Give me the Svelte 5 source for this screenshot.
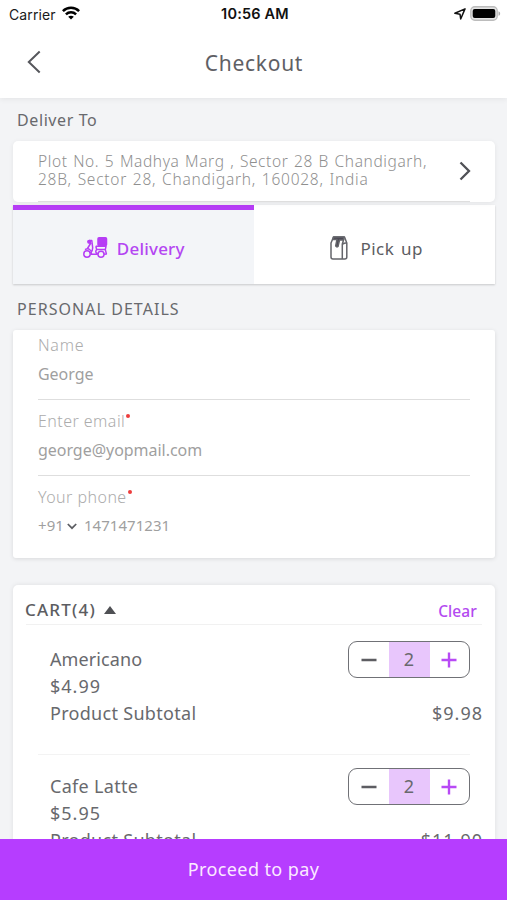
<script>
  const items = [
    { name: 'Americano', price: '$4.99', qty: 2, subtotal: '$9.98', tight: true },
    { name: 'Cafe Latte', price: '$5.95', qty: 2, subtotal: '$11.90', tight: false }
  ];
</script>

<div class="screen">
  <header>
    <div class="status">
      <div class="carrier">
        <span>Carrier</span>
        <svg width="18" height="14" viewBox="0 0 18 14" fill="none" stroke="#000" stroke-width="2.5">
          <path d="M.9 5.1C5.4.6 12.6.6 17.1 5.1" />
          <path d="M3.9 8.4c2.9-2.8 7.300-2.800 10.200 0" />
          <path d="M6.200 10.800c1.600-1.500 4-1.500 5.600 0L9 13.600Z" fill="#000" stroke="none" />
        </svg>
      </div>
      <div class="time">10:56 AM</div>
      <div class="power">
        <svg width="12" height="12" viewBox="0 0 12 12" fill="none" stroke="#111" stroke-width="1.500" stroke-linejoin="round">
          <path d="M.9 5.300 11 .9 6.700 11 6 6.200Z" />
        </svg>
        <svg width="31" height="15" viewBox="0 0 31 15">
          <rect x=".8" y=".8" width="26.400" height="13.400" rx="4" fill="#e4e4e4" stroke="#bcbcbc" stroke-width="1.400" />
          <rect x="2.700" y="2.900" width="22.600" height="9.200" rx="2" fill="#000" />
          <path d="M28.500 5.200c2.200.8 2.200 3.800 0 4.600Z" fill="#aaa" />
        </svg>
      </div>
    </div>
    <div class="nav">
      <svg width="14" height="24" viewBox="0 0 14 24" fill="none" stroke="#56575c" stroke-width="2">
        <path d="M12.700 1.500 1.800 12l10.900 10.500" />
      </svg>
      <h1>Checkout</h1>
    </div>
  </header>

  <main>
    <h2 class="deliver">Deliver To</h2>
    <section class="address">
      <p><span class="l1">Plot No. 5 Madhya Marg , Sector 28 B Chandigarh,</span><br /><span class="l2">28B, Sector 28, Chandigarh, 160028, India</span></p>
      <svg width="12" height="20" viewBox="0 0 12 20" fill="none" stroke="#505156" stroke-width="2.300">
        <path d="m1.500 1.500 8.500 8.500-8.500 8.500" />
      </svg>
    </section>

    <section class="tabs">
      <div class="tab active">
        <svg width="25" height="22" viewBox="0 0 25 22" fill="none" stroke="#b63df5" stroke-width="1.500" stroke-linejoin="round">
          <rect x="15" y=".8" width="8.500" height="7.800" rx="1" fill="#b63df5" />
          <circle cx="4" cy="17" r="3.200" />
          <circle cx="18" cy="17.300" r="3" />
          <circle cx="6.200" cy="4.800" r="1.400" fill="#b63df5" />
          <path d="M6 3.600h2.800l.9 7.200c.2 2.400-.9 3.700-2.300 5.200M7.500 17.300h7.300M2 12.600c3.600-2.200 6.800.5 6.500 4.400M7.800 6 4.500 11.500M12.800 9.300h10.200l-.7 3.300 1.100 4.300-2.400.4M12.800 9.300l.9 3.200h8.500M13.700 12.500c-1.400 1.500-1.400 3.200 1.100 4.400" />
        </svg>
        <span>Delivery</span>
      </div>
      <div class="tab">
        <svg width="18" height="24" viewBox="0 0 18 24" fill="none" stroke="#64656b" stroke-width="1.500" stroke-linejoin="round">
          <path d="M3.500 1h11l2.300 6V21q0 2-2 2H3q-2 0-2-2V7Z" />
          <path d="M14 2.500 12.300 8v15M13 8q2-1.300 3.500-.8" />
          <path d="M3.500 1h10.700l-1 3H9.500L8 10.500q-1.500 1-2.300-.5L7 3.500H3Z" fill="#4c4a55" />
        </svg>
        <span>Pick up</span>
      </div>
    </section>

    <h2 class="personal">PERSONAL DETAILS</h2>
    <section class="form">
      <div class="field">
        <div class="label name-label">Name</div>
        <div class="value">George</div>
      </div>
      <div class="field">
        <div class="label">Enter email<i></i></div>
        <div class="value">george@yopmail.com</div>
      </div>
      <div class="field">
        <div class="label">Your phone<i></i></div>
        <div class="value phone">
          <span>+91</span>
          <svg width="10" height="7" viewBox="0 0 10 7" fill="none" stroke="#5c5d62" stroke-width="1.700"><path d="m.8 1 4.200 4.200L9.200 1" /></svg>
          <span>1471471231</span>
        </div>
      </div>
    </section>

    <section class="cart">
      <div class="cart-head">
        <span class="title">CART(4)</span>
        <svg width="12" height="8" viewBox="0 0 12 8"><path d="M0 8 6 0l6 8Z" fill="#4f5054" /></svg>
        <span class="clear">Clear</span>
      </div>
      {#each items as item}
        <div class="item">
          <div class="row">
            <span class:tight={item.tight}>{item.name}</span>
            <div class="stepper">
              <span class="btn"><svg width="16" height="16" viewBox="0 0 16 16" stroke="#5d5d62" stroke-width="2.400"><path d="M.5 8h15" /></svg></span>
              <span class="qty">{item.qty}</span>
              <span class="btn"><svg width="16" height="16" viewBox="0 0 16 16" stroke="#b84af5" stroke-width="2.400"><path d="M.5 8h15M8 .5v15" /></svg></span>
            </div>
          </div>
          <div class="row money">{item.price}</div>
          <div class="row"><span>Product Subtotal</span><span class="money">{item.subtotal}</span></div>
        </div>
      {/each}
    </section>
  </main>

  <footer>Proceed to pay</footer>
</div>

<style>
  :global(body) { margin: 0; }
  .screen {
    width: 507px; height: 900px; overflow: hidden;
    display: flex; flex-direction: column;
    background: #f3f4f6; color: #68696d;
    font-family: 'Noto Sans', 'Open Sans', sans-serif; font-size: 16px;
  }
  .screen * { box-sizing: border-box; }
  svg { display: block; flex: none; }
  h1, h2, p { margin: 0; font-weight: 400; }
  header { flex: none; height: 98px; background: #fff; box-shadow: 0 1px 6px rgba(0, 0, 0, .07); z-index: 1; }
  .status {
    height: 28px; padding: 0 6px 0 9px;
    display: grid; grid-template-columns: 1fr auto 1fr; align-items: center;
    font-family: Inter, sans-serif; font-size: 14px; color: #1a1a1a;
  }
  .carrier { display: flex; align-items: center; gap: 6px; letter-spacing: .1px; }
  .carrier svg { margin-top: -2px; }
  .time { font-weight: 600; font-size: 14.500px; letter-spacing: .2px; color: #111; margin-top: -1px; }
  .power { display: flex; justify-content: flex-end; align-items: center; gap: 4px; margin-top: -1px; }
  .nav { height: 70px; padding: 0 27px; display: grid; grid-template-columns: 60px 1fr 60px; align-items: center; }
  .nav svg { margin-top: -2px; }
  h1 { font-size: 21px; letter-spacing: .7px; padding-left: 1px; text-align: center; color: #5f6065; }
  main { flex: 1; min-height: 0; overflow: hidden; padding: 0 12px 0 13px; }
  h2 { font-size: 16px; padding-left: 4px; }
  .deliver { height: 43px; line-height: 45px; letter-spacing: .6px; }
  .address {
    height: 61px; padding: 0 24px 0 25px; border-radius: 5px; background: #fff;
    display: flex; align-items: center; justify-content: space-between;
    box-shadow: 0 1px 5px rgba(0, 0, 0, .07); position: relative;
  }
  .address::after { content: ''; position: absolute; left: 25px; right: 25px; bottom: 0; height: 1px; background: #dedede; }
  p { font-size: 15.500px; line-height: 17.500px; font-weight: 300; color: #8f8f8f; white-space: nowrap; margin-top: -2px; }
  .l1 { letter-spacing: .6px; word-spacing: 1px; }
  .l2 { letter-spacing: .75px; word-spacing: 1px; }
  .address svg { margin-top: -2px; }
  .tabs { margin-top: 3px; height: 79px; display: flex; background: #fff; box-shadow: 0 1px 2px rgba(0, 0, 0, .18); }
  .tab { flex: 1; display: flex; align-items: center; justify-content: center; font-size: 17px; letter-spacing: .45px; padding: 7px 0 0 4px; color: #5c5d62; }
  .tab svg { margin-right: 13px; }
  .tab span { word-spacing: 2px; }
  .tab.active { flex: 0 0 240.5px; background: #f3f5f8; border-top: 5px solid #b63df5; padding: 2px 0 0 1px; color: #b446f2; font-weight: 500; letter-spacing: .2px; }
  .tab.active svg { margin-right: 9px; }
  .personal { height: 46px; line-height: 50px; letter-spacing: 1.050px; }
  .form { height: 228px; padding: 0 25px; background: #fff; border-radius: 3px; box-shadow: 0 1px 4px rgba(0, 0, 0, .11); }
  .field { height: 76px; border-bottom: 1.500px solid #dedede; padding-top: 7px; }
  .field:first-child { height: 70px; padding-top: 1px; }
  .field:last-child { border: 0; }
  .label { height: 29px; line-height: 29px; font-weight: 300; color: #acacac; letter-spacing: .45px; display: flex; }
  .name-label { letter-spacing: .7px; }
  .label i { width: 4px; height: 4px; border-radius: 50%; background: #ed3d3d; margin: 7px 0 0 1px; }
  .value { height: 29px; line-height: 29px; color: #9f9f9f; letter-spacing: -.03px; }
  .phone { height: 27px; line-height: 27px; display: flex; align-items: center; font-size: 15px; letter-spacing: .05px; }
  .phone svg { margin: 2px 7px 0 3px; }
  .cart { margin-top: 27px; height: 400px; background: #fff; border-radius: 5px; box-shadow: 0 0 5px rgba(0, 0, 0, .09); padding: 0 13px; }
  .cart-head { height: 40px; padding: 11px 5px 0 0; border-bottom: 1px solid #f1f1f1; display: flex; align-items: center; }
  .title { font-size: 17px; font-weight: 500; letter-spacing: 1.200px; margin: -1px 8px 0 -1px; color: #5c5d61; }
  .clear { margin: 2px 0 0 auto; color: #b34af0; font-weight: 500; font-size: 15.500px; letter-spacing: .1px; }
  .item { height: 129px; padding: 21px 0 0 24px; font-size: 18px; letter-spacing: .3px; }
  .item + .item { padding-top: 19px; }
  .item + .item::before { content: ''; display: block; height: 1px; margin: -19px 12px 18px -12px; background: #f3f3f3; }
  .row { height: 27px; line-height: 27px; display: flex; justify-content: space-between; align-items: center; }
  .row .tight { letter-spacing: .1px; }
  .money { letter-spacing: 1px; }
  .row .money { margin-right: -1px; }
  .stepper { width: 122px; height: 37px; margin-right: 12px; border: 1.500px solid #707176; border-radius: 9px; display: flex; overflow: hidden; }
  .btn { flex: 1; display: flex; align-items: center; justify-content: center; }
  .qty { width: 41px; background: #e8c6fc; text-align: center; line-height: 34px; }
  footer { flex: none; height: 61px; line-height: 60px; background: #b63dff; color: #fbeaff; text-align: center; font-size: 18px; letter-spacing: .4px; z-index: 1; }
</style>
